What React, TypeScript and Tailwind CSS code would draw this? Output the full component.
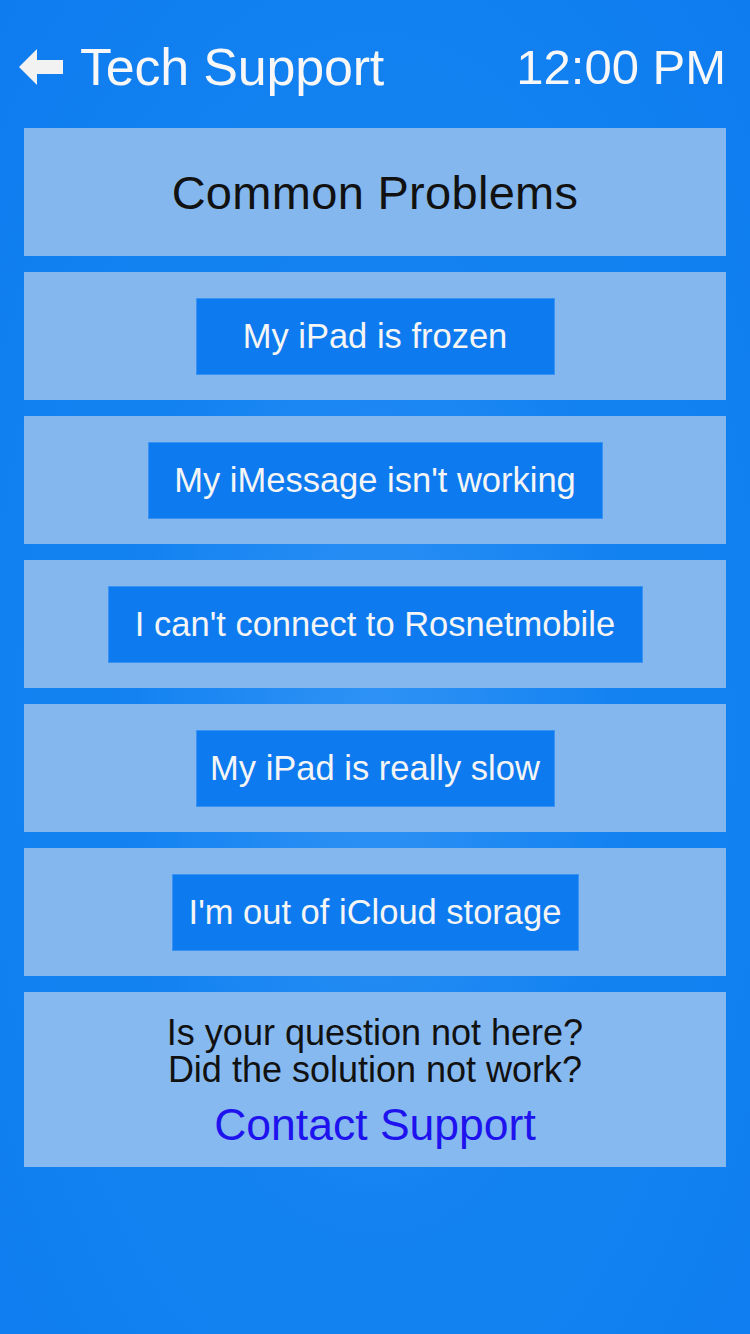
import React from "react";

const problems = [
  { label: "My iPad is frozen", w: "w-[359px]" },
  { label: "My iMessage isn't working", w: "w-[455px]" },
  { label: "I can't connect to Rosnetmobile", w: "w-[535px]" },
  { label: "My iPad is really slow", w: "w-[359px]" },
  { label: "I'm out of iCloud storage", w: "w-[407px]" },
];

export default function App() {
  return (
    <div
      className="w-[750px] h-[1334px] overflow-hidden bg-[#0f7ef0] bg-[radial-gradient(ellipse_at_50%_55%,#2f92f5_0%,#1483f1_45%,#0e7cef_100%)] text-white"
      style={{ fontFamily: '"Liberation Sans", Arial, sans-serif' }}
    >
      <div className="flex items-center justify-between pl-[19px] pr-[24px] pt-[22px] h-[128px] pb-[16px]">
        <div className="flex items-center gap-[16px]">
          <svg width="45" height="36" viewBox="0 0 45 36">
            <path d="M0 18 L18 0 L18 11 L44 11 L44 25 L18 25 L18 36 Z" fill="#f2f2f2" />
          </svg>
          <span className="text-[52px] leading-none tracking-[-0.2px] text-[#f7f7f7]">Tech Support</span>
        </div>
        <span className="text-[49px] leading-none text-[#f7f7f7]">12:00 PM</span>
      </div>

      <div className="flex flex-col gap-[16px] px-[24px]">
        <div className="h-[128px] bg-[#83b7ee] flex items-center justify-center">
          <span className="text-[47px] leading-none text-[#111] tracking-[0.3px]">Common Problems</span>
        </div>
        {problems.map((p) => (
          <div key={p.label} className="h-[128px] bg-[#83b7ee] flex items-center justify-center">
            <div
              className={`${p.w} h-[77px] bg-[#0d7bef] border border-[#3a93f3] flex items-center justify-center`}
            >
              <span className="text-[34.5px] leading-none text-[#f5f5f5] whitespace-nowrap">{p.label}</span>
            </div>
          </div>
        ))}
        <div className="h-[175px] bg-[#86b9ef] flex flex-col items-center pt-[22px]">
          <span className="text-[36px] leading-[37px] text-[#111]">Is your question not here?</span>
          <span className="text-[36px] leading-[37px] text-[#111]">Did the solution not work?</span>
          <span className="text-[44.5px] leading-none text-[#1e12ee] mt-[15px]">Contact Support</span>
        </div>
      </div>
    </div>
  );
}
